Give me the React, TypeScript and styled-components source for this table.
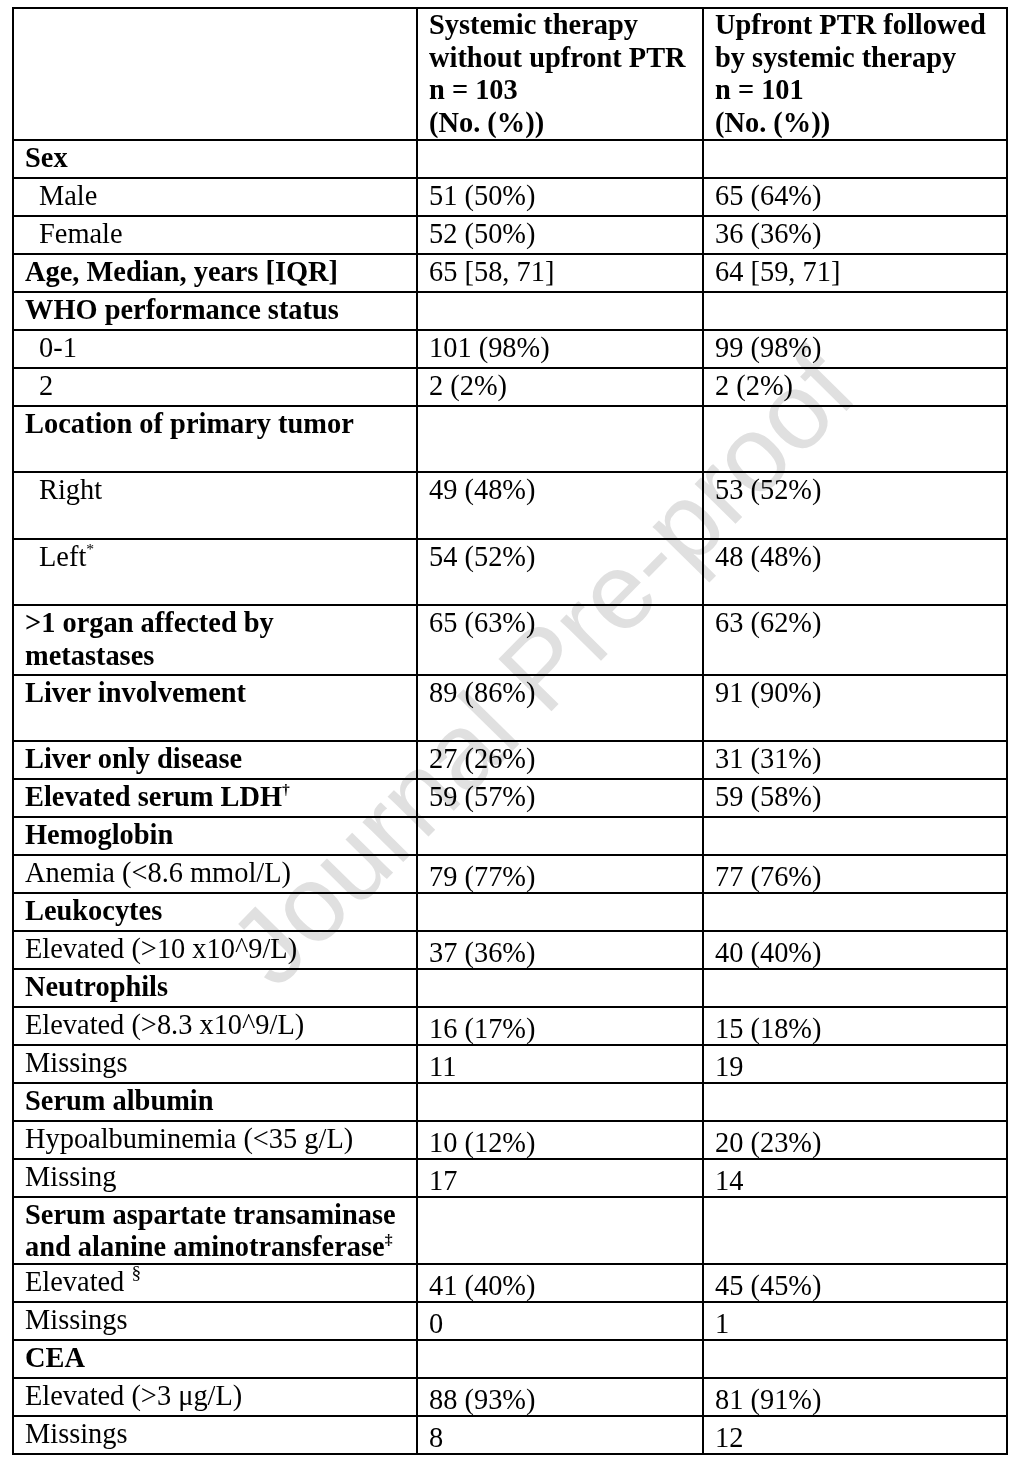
import React from "react";
import styled, { createGlobalStyle } from "styled-components";

const Global = createGlobalStyle`
  html, body { margin: 0; padding: 0; background: #fff; }
  body { font-family: "Liberation Serif", "Times New Roman", serif; color: #000; }
`;

const Page = styled.div`
  position: relative;
  padding: 7px 0 20px 12px;
`;

const Table = styled.table`
  border-collapse: collapse;
  table-layout: fixed;
  width: 994px;
  font-family: "Liberation Serif", "Times New Roman", serif;
  font-size: 28.4px;
  line-height: 32.5px;
`;

const Row = styled.tr<{ $h: number }>`
  height: ${(p) => p.$h}px;
`;

const Cell = styled.td<{ $bold?: boolean; $indent?: boolean; $shift?: boolean; $tight?: boolean }>`
  border: 2px solid #000;
  vertical-align: top;
  padding: ${(p) => (p.$shift ? "5px 11px 0 11px" : p.$tight ? "1px 11px 0 11px" : "1px 11px 2px 11px")};
  padding-left: ${(p) => (p.$indent ? 25 : 11)}px;
  line-height: ${(p) => (p.$shift ? "31px" : p.$tight ? "32px" : "32.5px")};
  font-weight: ${(p) => (p.$bold ? 700 : 400)};
  white-space: nowrap;
`;

const HeadCell = styled.th`
  border: 2px solid #000;
  vertical-align: top;
  text-align: left;
  padding: 0 11px;
  font-weight: 700;
  white-space: nowrap;
`;

const Sup = styled.sup<{ $big?: boolean }>`
  font-size: ${(p) => (p.$big ? "0.68em" : "0.55em")};
  line-height: 0;
  vertical-align: ${(p) => (p.$big ? "0.62em" : "0.75em")};
`;

const Watermark = styled.div`
  position: absolute;
  left: 542px;
  top: 668px;
  transform: translate(-50%, -50%) rotate(-45.5deg);
  font-family: "Liberation Sans", Arial, sans-serif;
  font-size: 108px;
  line-height: 1;
  color: #e0e0e0;
  white-space: nowrap;
  pointer-events: none;
  mix-blend-mode: multiply;
`;

type R = {
  label: React.ReactNode;
  a?: string;
  b?: string;
  bold?: boolean;
  indent?: boolean;
  shift?: boolean;
  tight?: boolean;
  h?: number;
};

const rows: R[] = [
  { label: "Sex", bold: true },
  { label: "Male", indent: true, a: "51 (50%)", b: "65 (64%)" },
  { label: "Female", indent: true, a: "52 (50%)", b: "36 (36%)" },
  { label: "Age, Median, years [IQR]", bold: true, a: "65 [58, 71]", b: "64 [59, 71]" },
  { label: "WHO performance status", bold: true },
  { label: "0-1", indent: true, a: "101 (98%)", b: "99 (98%)" },
  { label: "2", indent: true, a: "2 (2%)", b: "2 (2%)" },
  { label: "Location of primary tumor", bold: true, h: 66 },
  { label: "Right", indent: true, a: "49 (48%)", b: "53 (52%)", h: 67 },
  {
    label: (
      <>
        Left<Sup>*</Sup>
      </>
    ),
    indent: true,
    a: "54 (52%)",
    b: "48 (48%)",
    h: 66,
  },
  {
    label: (
      <>
        &gt;1 organ affected by
        <br />
        metastases
      </>
    ),
    bold: true,
    a: "65 (63%)",
    b: "63 (62%)",
    h: 70,
  },
  { label: "Liver involvement", bold: true, a: "89 (86%)", b: "91 (90%)", h: 66 },
  { label: "Liver only disease", bold: true, a: "27 (26%)", b: "31 (31%)" },
  {
    label: (
      <>
        Elevated serum LDH<Sup>†</Sup>
      </>
    ),
    bold: true,
    a: "59 (57%)",
    b: "59 (58%)",
  },
  { label: "Hemoglobin", bold: true },
  { label: "Anemia (<8.6 mmol/L)", a: "79 (77%)", b: "77 (76%)", shift: true },
  { label: "Leukocytes", bold: true },
  { label: "Elevated (>10 x10^9/L)", a: "37 (36%)", b: "40 (40%)", shift: true },
  { label: "Neutrophils", bold: true },
  { label: "Elevated (>8.3 x10^9/L)", a: "16 (17%)", b: "15 (18%)", shift: true },
  { label: "Missings", a: "11", b: "19", shift: true },
  { label: "Serum albumin", bold: true },
  { label: "Hypoalbuminemia (<35 g/L)", a: "10 (12%)", b: "20 (23%)", shift: true },
  { label: "Missing", a: "17", b: "14", shift: true },
  {
    label: (
      <>
        Serum aspartate transaminase
        <br />
        and alanine aminotransferase<Sup>‡</Sup>
      </>
    ),
    bold: true,
    tight: true,
    h: 67,
  },
  {
    label: (
      <>
        Elevated <Sup $big>§</Sup>
      </>
    ),
    a: "41 (40%)",
    b: "45 (45%)",
    shift: true,
  },
  { label: "Missings", a: "0", b: "1", shift: true },
  { label: "CEA", bold: true },
  { label: "Elevated (>3 μg/L)", a: "88 (93%)", b: "81 (91%)", shift: true },
  { label: "Missings", a: "8", b: "12", shift: true },
];

export default function App() {
  return (
    <Page>
      <Global />
      <Table>
        <colgroup>
          <col style={{ width: 404 }} />
          <col style={{ width: 286 }} />
          <col style={{ width: 304 }} />
        </colgroup>
        <thead>
          <Row $h={132}>
            <HeadCell />
            <HeadCell>
              Systemic therapy
              <br />
              without upfront PTR
              <br />n = 103
              <br />
              (No. (%))
            </HeadCell>
            <HeadCell>
              Upfront PTR followed
              <br />
              by systemic therapy
              <br />n = 101
              <br />
              (No. (%))
            </HeadCell>
          </Row>
        </thead>
        <tbody>
          {rows.map((r, i) => (
            <Row key={i} $h={r.h ?? 38}>
              <Cell $bold={r.bold} $indent={r.indent} $tight={r.tight}>
                {r.label}
              </Cell>
              <Cell $shift={r.shift} $tight={r.tight}>{r.a ?? ""}</Cell>
              <Cell $shift={r.shift} $tight={r.tight}>{r.b ?? ""}</Cell>
            </Row>
          ))}
        </tbody>
      </Table>
      <Watermark>Journal Pre-proof</Watermark>
    </Page>
  );
}
